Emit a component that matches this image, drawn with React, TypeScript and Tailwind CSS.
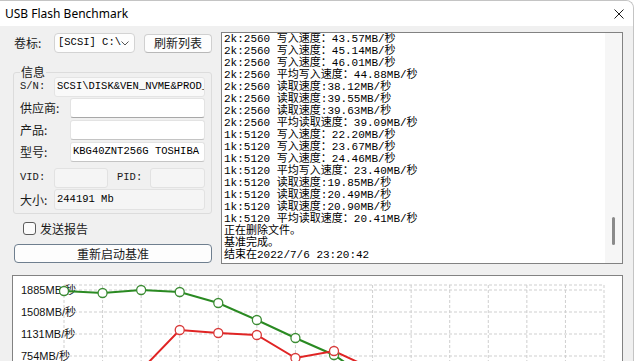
import React from 'react'

const mono = "font-['Liberation_Mono','Noto_Sans_CJK_SC',monospace]"
const cjk = "font-['Noto_Sans_CJK_SC','Noto_Sans',sans-serif]"

const logLines = [
    '2k:2560 写入速度：43.57MB/秒',
    '2k:2560 写入速度：45.14MB/秒',
    '2k:2560 写入速度：46.01MB/秒',
    '2k:2560 平均写入速度：44.88MB/秒',
    '2k:2560 读取速度:38.12MB/秒',
    '2k:2560 读取速度:39.55MB/秒',
    '2k:2560 读取速度:39.63MB/秒',
    '2k:2560 平均读取速度：39.09MB/秒',
    '1k:5120 写入速度：22.20MB/秒',
    '1k:5120 写入速度：23.67MB/秒',
    '1k:5120 写入速度：24.46MB/秒',
    '1k:5120 平均写入速度：23.40MB/秒',
    '1k:5120 读取速度:19.85MB/秒',
    '1k:5120 读取速度:20.49MB/秒',
    '1k:5120 读取速度:20.90MB/秒',
    '1k:5120 平均读取速度：20.41MB/秒',
    '正在删除文件。',
    '基准完成。',
    '结束在2022/7/6 23:20:42',
]

// chart data, in page pixels
const gridX = Array.from({ length: 15 }, (_, i) => 64 + (i * 540) / 14)
const gridY = [289, 311, 333, 355]
const yLabels = ['1885MB/秒', '1508MB/秒', '1131MB/秒', '754MB/秒']
const green = [290, 292, 289, 291, 302, 319, 337, 354, 380]
const red: (number | null)[] = [null, null, 369, 329, 332, 334, 357, 350, 368]

const Chart = () => {
    const greenPts = green.map((y, i) => [gridX[i], y] as const)
    const redPts = red
        .map((y, i) => (y === null ? null : ([gridX[i], y] as const)))
        .filter((p): p is readonly [number, number] => p !== null)

    return (
        <svg width="609" height="90" viewBox="13 275 609 90" className="block">
            <rect x="64" y="284" width="540" height="120" fill="#ffffff" />
            <line x1="64" y1="284" x2="604" y2="284" stroke="#cfcfcf" strokeDasharray="3 2" />
            {gridY.map((y) => (
                <line key={y} x1="64" y1={y} x2="604" y2={y} stroke="#cfcfcf" strokeDasharray="3 2" />
            ))}
            {gridX.map((x) => (
                <line key={x} x1={x} y1="284" x2={x} y2="400" stroke="#cfcfcf" strokeDasharray="3 2" />
            ))}
            {yLabels.map((t, i) => (
                <text
                    key={t}
                    x="21"
                    y={gridY[i] + 4}
                    fontSize="11"
                    fontFamily="'Liberation Sans','Noto Sans CJK SC',sans-serif"
                    fill="#111"
                >
                    {t}
                </text>
            ))}
            <polyline
                points={greenPts.map((p) => p.join(',')).join(' ')}
                fill="none"
                stroke="#2a8a22"
                strokeWidth="2"
            />
            <polyline
                points={redPts.map((p) => p.join(',')).join(' ')}
                fill="none"
                stroke="#e02424"
                strokeWidth="2"
            />
            {greenPts.map(([x, y]) => (
                <circle key={'g' + x} cx={x} cy={y} r="4.5" fill="#fff" stroke="#3c8c34" strokeWidth="1.3" />
            ))}
            {redPts.map(([x, y]) => (
                <circle key={'r' + x} cx={x} cy={y} r="4.5" fill="#fff" stroke="#d83a3a" strokeWidth="1.3" />
            ))}
        </svg>
    )
}

const Label = ({ w, children, isMono }: { w: string; children: React.ReactNode; isMono?: boolean }) => (
    <div className={`${w} shrink-0 ${isMono ? `${mono} text-[10.5px]` : `${cjk} text-[12px]`} text-[#1a1a1a]`}>
        {children}
    </div>
)

export default function App() {
    return (
        <div className="w-[636px] h-[361px] overflow-hidden bg-white">
            <div className="w-[634px] h-full overflow-hidden bg-[#f0f0f0] border-t border-r border-[#c4c4c4] rounded-tr-[8px]">
                {/* title bar */}
                <div className="h-[25px] bg-white flex items-center justify-between pl-[5px] pr-[9px]">
                    <span className="font-['Noto_Sans',sans-serif] text-[12px] text-black">USB Flash Benchmark</span>
                    <svg width="10" height="10" viewBox="0 0 10 10">
                        <path d="M0.5 0.5L9.5 9.5M9.5 0.5L0.5 9.5" stroke="#1a1a1a" strokeWidth="1" />
                    </svg>
                </div>

                <div className="pt-[6px]">
                    <div className="flex pl-[13px]">
                        {/* left column */}
                        <div className="w-[199px] pt-[1px]">
                            <div className="flex items-center h-[20px]">
                                <div className={`ml-[1px] w-[40px] ${cjk} text-[12px] text-[#1a1a1a]`}>卷标:</div>
                                <div className="w-[81px] h-[20px] bg-[#fdfdfd] border border-[#d3d3d3] rounded-[4px] flex items-center justify-between pl-[3px] pr-[5px]">
                                    <span className={`${mono} text-[10.5px] text-black`}>[SCSI] C:\</span>
                                    <svg width="8" height="5" viewBox="0 0 8 5">
                                        <path d="M0.5 0.5L4 4L7.5 0.5" fill="none" stroke="#555" strokeWidth="1" />
                                    </svg>
                                </div>
                                <button className={`ml-[9px] w-[68px] h-[19px] bg-[#fdfdfd] border border-[#d0d0d0] border-b-[#b8b8b8] rounded-[4px] ${cjk} text-[12px] leading-none text-[#1a1a1a]`}>
                                    刷新列表
                                </button>
                            </div>

                            {/* info group */}
                            <div className="relative mt-[19px] w-[199px] h-[142px] border border-[#dcdcdc] rounded-[3px] px-[6px] pt-[4px]">
                                <div className={`absolute -top-[9px] left-[6px] bg-[#f0f0f0] px-[1px] ${cjk} text-[12px] leading-[16px] text-[#1a1a1a]`}>
                                    信息
                                </div>
                                <div className="flex items-center h-[20px]">
                                    <Label w="w-[34px]" isMono>S/N:</Label>
                                    <div className={`w-[151px] h-[20px] flex items-center overflow-hidden whitespace-nowrap pl-[2px] bg-[#f9f9f9] border border-[#e4e4e4] rounded-[3px] ${mono} text-[10.5px] text-black`}>
                                        SCSI\DISK&amp;VEN_NVME&amp;PROD_KBG40ZNT256G
                                    </div>
                                </div>
                                <div className="flex items-center h-[20px] mt-[1px]">
                                    <Label w="w-[50px]">供应商:</Label>
                                    <div className="w-[135px] h-[20px] bg-white border border-[#e3e3e3] border-b-[#a8a8a8] rounded-[3px]" />
                                </div>
                                <div className="flex items-center h-[20px] mt-[2px]">
                                    <Label w="w-[50px]">产品:</Label>
                                    <div className="w-[135px] h-[20px] bg-white border border-[#e3e3e3] border-b-[#c4c4c4] rounded-[3px]" />
                                </div>
                                <div className="flex items-center h-[20px] mt-[2px]">
                                    <Label w="w-[50px]">型号:</Label>
                                    <div className={`w-[135px] h-[20px] flex items-center overflow-hidden whitespace-nowrap pl-[2px] bg-white border border-[#e3e3e3] border-b-[#c4c4c4] rounded-[3px] ${mono} text-[10.5px] text-black`}>
                                        KBG40ZNT256G TOSHIBA MEMORY
                                    </div>
                                </div>
                                <div className="flex items-center h-[20px] mt-[6px]">
                                    <Label w="w-[34px]" isMono>VID:</Label>
                                    <div className="w-[54px] h-[20px] bg-[#f5f5f5] border border-[#e2e2e2] rounded-[3px]" />
                                    <div className="ml-[9px]">
                                        <Label w="w-[33px]" isMono>PID:</Label>
                                    </div>
                                    <div className="w-[55px] h-[20px] bg-[#f5f5f5] border border-[#e2e2e2] rounded-[3px]" />
                                </div>
                                <div className="flex items-center h-[21px] mt-[1px]">
                                    <Label w="w-[34px]">大小:</Label>
                                    <div className={`w-[151px] h-[21px] flex items-center pl-[2px] bg-[#f5f5f5] border border-[#e2e2e2] rounded-[3px] ${mono} text-[10.5px] text-black`}>
                                        244191 Mb
                                    </div>
                                </div>
                            </div>

                            <div className="flex items-center h-[13px] mt-[8px] pl-[10px]">
                                <div className="w-[13px] h-[13px] rounded-[3px] border border-[#5c5c5c] bg-[#fbfbfb]" />
                                <span className={`ml-[4px] ${cjk} text-[12px] text-[#1a1a1a]`}>发送报告</span>
                            </div>

                            <button className={`mt-[9px] ml-[1px] w-[198px] h-[19px] bg-[#fdfdfd] border border-[#6f7f8f] rounded-[4px] ${cjk} text-[12px] leading-none text-[#1a1a1a]`}>
                                重新启动基准
                            </button>
                        </div>

                        {/* log */}
                        <div className="ml-[9px] w-[402px] h-[232px] flex bg-white border border-[#828282] overflow-hidden">
                            <div className={`flex-1 pl-[2px] ${mono} text-[11px] leading-[12px] text-black whitespace-nowrap overflow-hidden`}>
                                {logLines.map((l, i) => (
                                    <div key={i}>{l}</div>
                                ))}
                            </div>
                            <div className="w-[17px] h-full bg-[#f6f6f6] flex flex-col items-center pt-[184px]">
                                <div className="w-[3px] h-[28px] rounded-full bg-[#8a8a8a]" />
                            </div>
                        </div>
                    </div>

                    {/* chart */}
                    <div className="mt-[10px] ml-[12px] w-[611px] h-[100px] bg-white border border-[#828282] overflow-hidden">
                        <Chart />
                    </div>
                </div>
            </div>
        </div>
    )
}
